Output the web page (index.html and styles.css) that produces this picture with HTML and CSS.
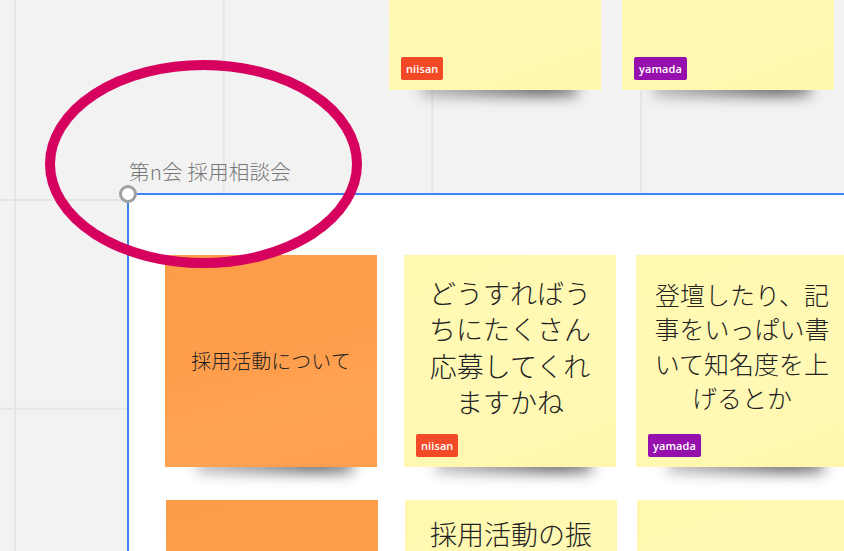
FILE: index.html
```html
<!DOCTYPE html>
<html lang="ja">
<head>
<meta charset="utf-8">
<title>Board</title>
<link rel="stylesheet" href="styles.css">
</head>
<body>
<div class="board">
  <div class="top-row">
    <div class="sticky yellow">
      <div class="sticky-text"></div>
      <span class="tag red">niisan</span>
    </div>
    <div class="sticky yellow">
      <div class="sticky-text"></div>
      <span class="tag purple">yamada</span>
    </div>
  </div>

  <div class="frame">
    <div class="frame-title">第n会 採用相談会</div>
    <span class="frame-handle"></span>
    <div class="frame-grid">
      <div class="sticky orange">
        <div class="sticky-text small">採用活動について</div>
      </div>
      <div class="sticky yellow">
        <div class="sticky-text large">どうすればう<br>ちにたくさん<br>応募してくれ<br>ますかね</div>
        <span class="tag red">niisan</span>
      </div>
      <div class="sticky yellow">
        <div class="sticky-text medium">登壇したり、記<br>事をいっぱい書<br>いて知名度を上<br>げるとか</div>
        <span class="tag purple">yamada</span>
      </div>
      <div class="sticky orange row2"></div>
      <div class="sticky yellow row2">
        <div class="sticky-text large top">採用活動の振</div>
      </div>
      <div class="sticky yellow row2"></div>
    </div>
  </div>

  <svg class="ellipse" width="844" height="551" viewBox="0 0 844 551">
    <ellipse cx="203.5" cy="164" rx="153.5" ry="99" fill="none" stroke="#d6005f" stroke-width="10"/>
  </svg>
</div>
</body>
</html>
```

FILE: styles.css
```css
html, body {
  margin: 0;
  padding: 0;
  width: 844px;
  height: 551px;
  overflow: hidden;
}

body {
  font-family: "Noto Sans CJK JP", "Noto Sans", sans-serif;
  background: #f2f2f2;
}

.board {
  position: relative;
  width: 844px;
  height: 551px;
  overflow: hidden;
  background-color: #f2f2f2;
  background-image:
    linear-gradient(to right, #e5e5e5 0, #e5e5e5 2px, transparent 2px),
    linear-gradient(to bottom, #e5e5e5 0, #e5e5e5 2px, transparent 2px);
  background-size: 208.7px 208.7px;
  background-position: 14px 199px;
}

/* stickies */
.sticky {
  position: relative;
  width: 212px;
  height: 212px;
  box-sizing: border-box;
  padding: 12px 12px 10px;
  display: flex;
  flex-direction: column;
  align-items: flex-start;
}

.sticky::after {
  content: "";
  position: absolute;
  left: 32px;
  right: 24px;
  bottom: -6px;
  height: 16px;
  background: linear-gradient(to right, rgba(0,0,0,0.25), rgba(0,0,0,0.62) 78%, rgba(0,0,0,0.45));
  filter: blur(7px);
  z-index: -1;
}

.yellow {
  background: linear-gradient(160deg, #fff8ae 0%, #fff9b6 55%, #fff7ac 100%);
}

.orange {
  background: linear-gradient(165deg, #fd9c48 0%, #ff9f4d 55%, #ffa454 70%, #ff9f4e 100%);
}

.sticky-text {
  flex: 1;
  align-self: stretch;
  display: flex;
  align-items: center;
  justify-content: center;
  text-align: center;
  color: #222;
  font-weight: 300;
}

.sticky-text.small {
  font-size: 20px;
  line-height: 1.4;
  padding-bottom: 2px;
}

.sticky-text.large {
  font-size: 27px;
  line-height: 36.5px;
  padding-bottom: 6px;
}

.sticky-text.medium {
  font-size: 25px;
  line-height: 34.5px;
  padding-bottom: 10px;
}

.sticky-text.top {
  align-items: flex-start;
  padding-top: 4px;
}

.tag {
  display: inline-flex;
  align-items: center;
  height: 23px;
  padding: 0 5px;
  border-radius: 2px;
  color: #fff;
  font-family: "Open Sans", "Noto Sans", sans-serif;
  font-size: 11px;
  font-weight: 600;
  letter-spacing: 0.1px;
}

.tag.red { background: #f24a26; }
.tag.purple { background: #9510ac; }

/* top row of stickies on the canvas */
.top-row {
  position: absolute;
  left: 389px;
  top: -122px;
  display: flex;
  gap: 21px;
  z-index: 0;
}

/* frame */
.frame {
  position: absolute;
  left: 127px;
  top: 193px;
  width: 760px;
  height: 420px;
  background: #fff;
  border-top: 2px solid #3d84f5;
  border-left: 2px solid #3d84f5;
  z-index: 0;
}

.frame-title {
  position: absolute;
  left: 0;
  top: -39px;
  font-size: 20.5px;
  font-weight: 300;
  color: #777;
  white-space: nowrap;
  letter-spacing: 0.2px;
}

.frame-handle {
  position: absolute;
  left: -10px;
  top: -10px;
  width: 12px;
  height: 12px;
  border: 3px solid #a0a0a0;
  border-radius: 50%;
  background: #fff;
  z-index: 2;
}

.frame-grid {
  display: grid;
  grid-template-columns: 239px 232px 212px;
  row-gap: 33px;
  padding: 60px 0 0 36px;
}

.row2 {
  margin-left: 1px;
}

.ellipse {
  position: absolute;
  left: 0;
  top: 0;
  z-index: 3;
  pointer-events: none;
}
```
